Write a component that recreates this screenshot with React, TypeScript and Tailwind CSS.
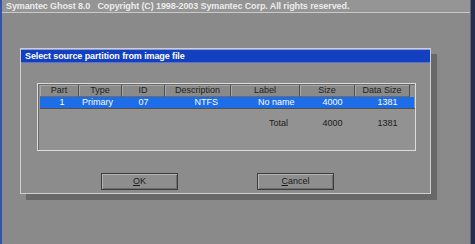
import React from 'react';

const cols = [
  { label: 'Part', w: 'w-[39px]' },
  { label: 'Type', w: 'w-[43px]' },
  { label: 'ID', w: 'w-[43px]' },
  { label: 'Description', w: 'w-[66px]' },
  { label: 'Label', w: 'w-[69px]' },
  { label: 'Size', w: 'w-[55px]' },
  { label: 'Data Size', w: 'w-[55px]' },
];

const GhostButton = ({ first, rest }: { first: string; rest: string }) => (
  <button className="w-[77px] h-[17px] bg-[#8e8e8e] border border-[#3c3c3c] shadow-[inset_1px_1px_0_#b4b4b4,inset_-1px_-1px_0_#6e6e6e] text-[9px] text-[#1a1a1a] leading-none">
    <span className="underline">{first}</span>
    {rest}
  </button>
);

export default function App() {
  return (
    <div className="w-[475px] h-[244px] flex bg-[#8a8a8a] overflow-hidden font-['Liberation_Sans',sans-serif]">
      <div className="w-[2px] bg-[#3552a6]" />
      <div className="flex-1 flex flex-col">
        {/* top banner */}
        <div className="h-[13px] bg-[#959595] border-b border-[#c9c9c9] pl-[4px] flex items-center text-[9px] tracking-[-0.1px] font-bold text-[#ececec] whitespace-pre leading-none">
          Symantec Ghost 8.0   Copyright (C) 1998-2003 Symantec Corp. All rights reserved.
        </div>

        <div className="pl-[18px] pt-[35px]">
          <div className="w-[411px] h-[146px] bg-[#8c8c8c] border border-[#cfcfcf] shadow-[6px_6px_0_#686868] flex flex-col">
            {/* dialog title */}
            <div className="h-[14px] bg-[#1240c0] border-t border-[#8a9ce0] border-b border-b-[#5a74d0] pl-[4px] flex items-center text-[9px] tracking-[-0.1px] font-bold text-white leading-none">
              Select source partition from image file
            </div>

            {/* table */}
            <div className="ml-[16px] mt-[20px] w-[379px] h-[68px] bg-[#929292] border border-[#dcdcdc] shadow-[inset_1px_1px_0_#6a6a6a] pl-[2px] pt-[1px]">
              <div className="border-b border-[#505050]">
                <div className="flex h-[12px]">
                  {cols.map((c) => (
                    <div
                      key={c.label}
                      className={`${c.w} bg-[#8a8a8a] border-r border-[#4e4e4e] border-b border-b-[#6a6a6a] shadow-[inset_1px_1px_0_#a8a8a8] flex items-center justify-center text-[9px] text-[#222] leading-none`}
                    >
                      {c.label}
                    </div>
                  ))}
                </div>
                <div className="flex h-[11px] bg-[#1d6ce8] text-[9px] text-white leading-none items-center mr-[1px]">
                  <div className="w-[39px] text-center pl-[5px]">1</div>
                  <div className="w-[43px] pl-[3px]">Primary</div>
                  <div className="w-[43px] text-center">07</div>
                  <div className="w-[66px] text-right pr-[13px]">NTFS</div>
                  <div className="w-[69px] pl-[27px]">No name</div>
                  <div className="w-[55px] text-center pl-[10px]">4000</div>
                  <div className="w-[55px] text-center pl-[10px]">1381</div>
                </div>
              </div>
              <div className="flex h-[11px] mt-[9px] text-[9px] text-[#1c1c1c] leading-none items-center">
                <div className="w-[191px]" />
                <div className="w-[69px] text-right pr-[12px]">Total</div>
                <div className="w-[55px] text-center pl-[10px]">4000</div>
                <div className="w-[55px] text-center pl-[10px]">1381</div>
              </div>
            </div>

            {/* buttons */}
            <div className="flex mt-[22px] pl-[80px] gap-[79px]">
              <GhostButton first="O" rest="K" />
              <GhostButton first="C" rest="ancel" />
            </div>
          </div>
        </div>
      </div>
      <div className="w-[5px] bg-[#283048] shadow-[inset_1px_0_0_#5a6890]" />
    </div>
  );
}
